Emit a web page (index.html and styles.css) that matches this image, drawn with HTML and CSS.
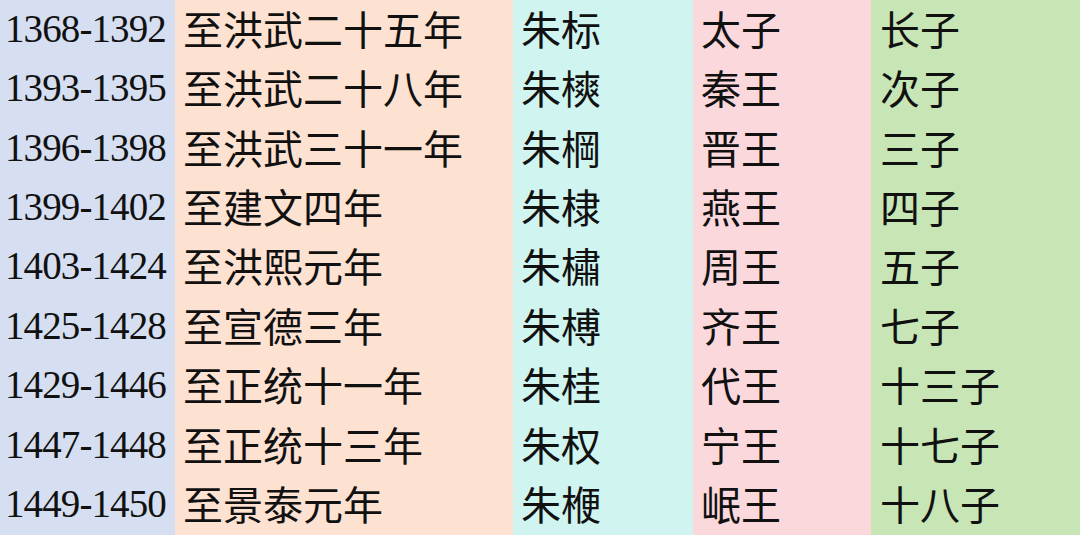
FILE: index.html
```html
<!DOCTYPE html>
<html lang="zh">
<head>
<meta charset="utf-8">
<link rel="stylesheet" href="styles.css">
</head>
<body>
<div class="table">
  <div class="col c1">
    <div class="cell num">1368-1392</div>
    <div class="cell num">1393-1395</div>
    <div class="cell num">1396-1398</div>
    <div class="cell num">1399-1402</div>
    <div class="cell num">1403-1424</div>
    <div class="cell num">1425-1428</div>
    <div class="cell num">1429-1446</div>
    <div class="cell num">1447-1448</div>
    <div class="cell num">1449-1450</div>
  </div>
  <div class="col c2">
    <div class="cell">至洪武二十五年</div>
    <div class="cell">至洪武二十八年</div>
    <div class="cell">至洪武三十一年</div>
    <div class="cell">至建文四年</div>
    <div class="cell">至洪熙元年</div>
    <div class="cell">至宣德三年</div>
    <div class="cell">至正统十一年</div>
    <div class="cell">至正统十三年</div>
    <div class="cell">至景泰元年</div>
  </div>
  <div class="col c3">
    <div class="cell">朱标</div>
    <div class="cell">朱樉</div>
    <div class="cell">朱棡</div>
    <div class="cell">朱棣</div>
    <div class="cell">朱橚</div>
    <div class="cell">朱榑</div>
    <div class="cell">朱桂</div>
    <div class="cell">朱权</div>
    <div class="cell">朱楩</div>
  </div>
  <div class="col c4">
    <div class="cell">太子</div>
    <div class="cell">秦王</div>
    <div class="cell">晋王</div>
    <div class="cell">燕王</div>
    <div class="cell">周王</div>
    <div class="cell">齐王</div>
    <div class="cell">代王</div>
    <div class="cell">宁王</div>
    <div class="cell">岷王</div>
  </div>
  <div class="col c5">
    <div class="cell">长子</div>
    <div class="cell">次子</div>
    <div class="cell">三子</div>
    <div class="cell">四子</div>
    <div class="cell">五子</div>
    <div class="cell">七子</div>
    <div class="cell">十三子</div>
    <div class="cell">十七子</div>
    <div class="cell">十八子</div>
  </div>
</div>
</body>
</html>
```

FILE: styles.css
```css
html, body {
  margin: 0;
  padding: 0;
  width: 1080px;
  height: 535px;
  overflow: hidden;
}
body {
  font-family: "Liberation Serif", "Noto Sans CJK SC", serif;
  color: #111;
}
.table {
  display: grid;
  grid-template-columns: 175px 338px 180px 178px 209px;
  height: 535px;
}
.col {
  display: grid;
  grid-template-rows: repeat(9, 1fr);
}
.c1 { background: #d6dff1; }
.c2 { background: #fde1d1; }
.c3 { background: #d0f4f0; }
.c4 { background: #fbd8dc; }
.c5 { background: #c8e5b6; }
.cell {
  display: flex;
  align-items: center;
  padding-left: 8px;
  padding-bottom: 4px;
  font-family: "Noto Sans CJK SC", sans-serif;
  font-size: 40px;
  font-weight: 400;
  line-height: 1;
  white-space: nowrap;
}
.c5 .cell { padding-left: 9px; }
.cell.num {
  padding-left: 5px;
  padding-bottom: 3px;
  font-family: "Liberation Serif", serif;
  font-size: 39px;
  letter-spacing: -0.9px;
}
```
